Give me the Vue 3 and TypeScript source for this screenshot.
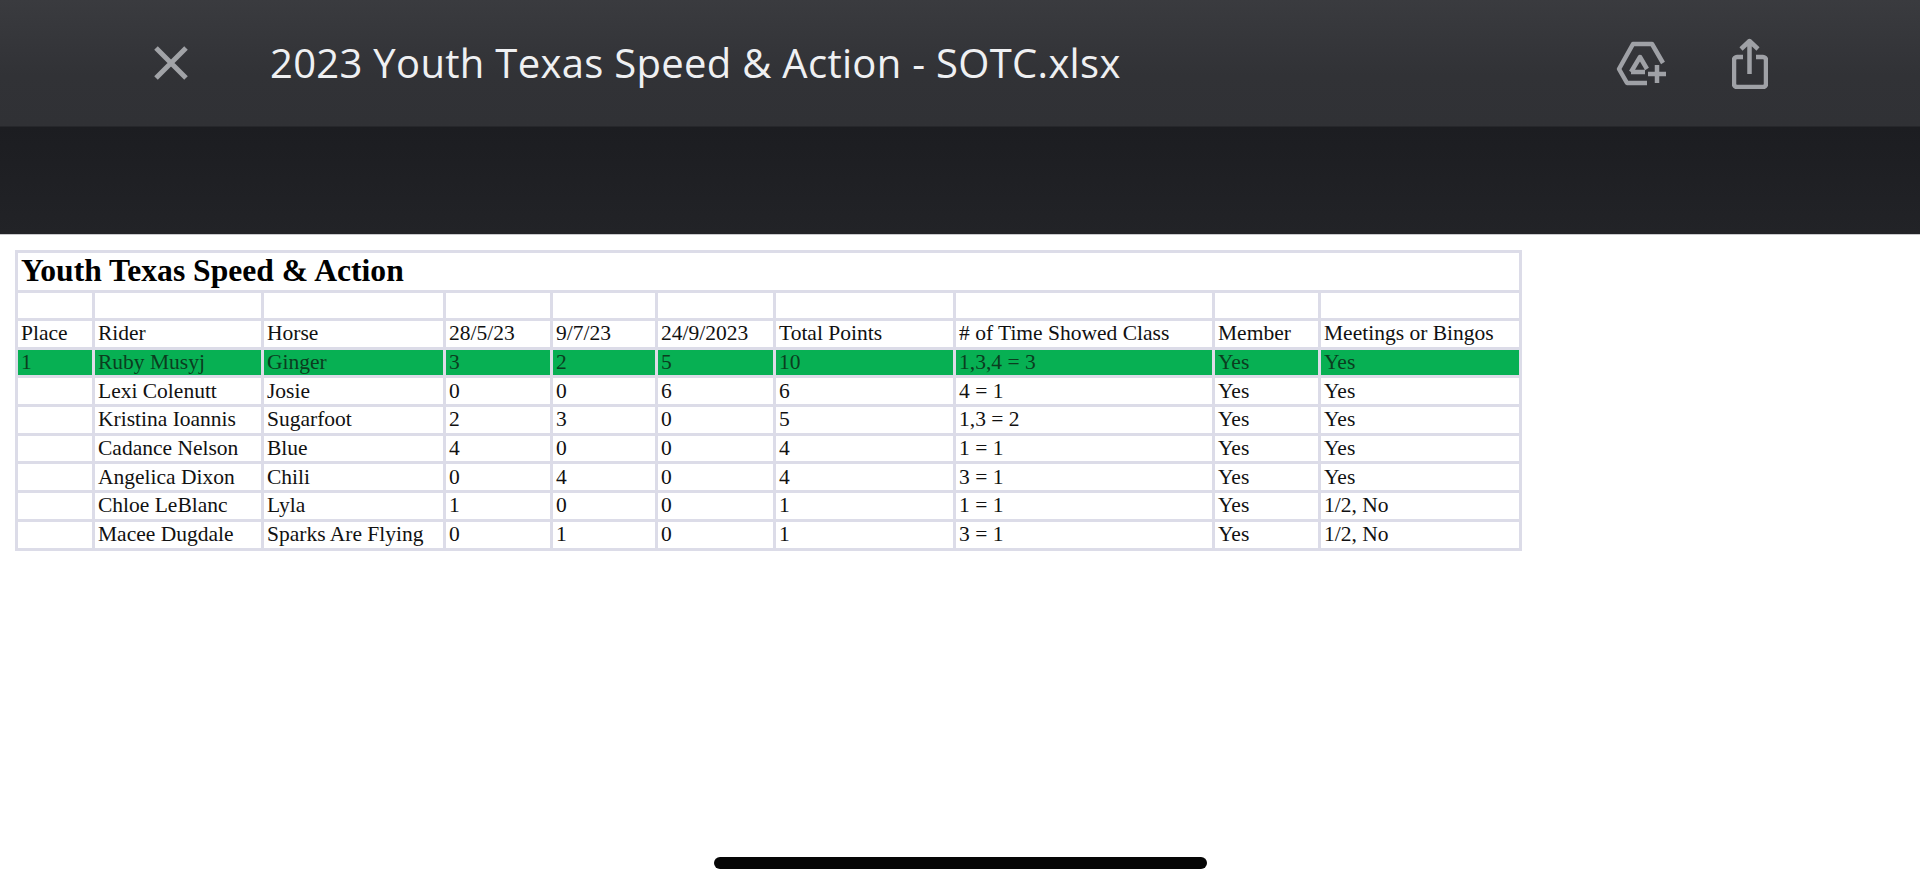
<script setup lang="ts">
const widths = [77, 169, 182, 107, 105, 118, 180, 259, 106, 201]
const headers = ['Place', 'Rider', 'Horse', '28/5/23', '9/7/23', '24/9/2023', 'Total Points', '# of Time Showed Class', 'Member', 'Meetings or Bingos']
const rows: string[][] = [
  ['1', 'Ruby Musyj', 'Ginger', '3', '2', '5', '10', '1,3,4 = 3', 'Yes', 'Yes'],
  ['', 'Lexi Colenutt', 'Josie', '0', '0', '6', '6', '4 = 1', 'Yes', 'Yes'],
  ['', 'Kristina Ioannis', 'Sugarfoot', '2', '3', '0', '5', '1,3 = 2', 'Yes', 'Yes'],
  ['', 'Cadance Nelson', 'Blue', '4', '0', '0', '4', '1 = 1', 'Yes', 'Yes'],
  ['', 'Angelica Dixon', 'Chili', '0', '4', '0', '4', '3 = 1', 'Yes', 'Yes'],
  ['', 'Chloe LeBlanc', 'Lyla', '1', '0', '0', '1', '1 = 1', 'Yes', '1/2, No'],
  ['', 'Macee Dugdale', 'Sparks Are Flying', '0', '1', '0', '1', '3 = 1', 'Yes', '1/2, No'],
]
</script>

<template>
  <div class="page">
    <header class="bar">
      <svg class="close" viewBox="0 0 34 34" width="34" height="34" aria-label="Close">
        <path d="M2 2 L32 32 M32 2 L2 32" />
      </svg>
      <h1 class="name">2023 Youth Texas Speed &amp; Action - SOTC.xlsx</h1>
      <svg class="drive" viewBox="0 0 56 50" width="56" height="50" aria-label="Add to Drive">
        <path d="M35 45 H15 L7 31 L21 6 H40 L51 25" />
        <path d="M19 34 L28 19 L35 31 M19 34 H33" />
        <path d="M45 27 V45 M36 36 H54" />
      </svg>
      <svg class="share" viewBox="0 0 36 51" width="36" height="51" aria-label="Share">
        <path d="M11 19 H5 a3 3 0 0 0 -3 3 V46 a3 3 0 0 0 3 3 H31 a3 3 0 0 0 3 -3 V22 a3 3 0 0 0 -3 -3 H24" />
        <path d="M17.5 36 V3 M9 11 L17.5 3 L26 11" />
      </svg>
    </header>
    <div class="gap"></div>
    <main class="sheet">
      <table class="grid">
        <colgroup>
          <col v-for="(w, i) in widths" :key="i" :style="{ width: w + 'px' }" />
        </colgroup>
        <tbody>
          <tr class="title-row"><td colspan="10">Youth Texas Speed &amp; Action</td></tr>
          <tr class="blank"><td v-for="i in 10" :key="i"></td></tr>
          <tr><td v-for="h in headers" :key="h">{{ h }}</td></tr>
          <tr v-for="(r, ri) in rows" :key="ri" :class="{ win: ri === 0 }">
            <td v-for="(c, ci) in r" :key="ci">{{ c }}</td>
          </tr>
        </tbody>
      </table>
    </main>
    <div class="home"></div>
  </div>
</template>

<style>
html, body { margin: 0; background: #fff; }
</style>

<style scoped>
.page {
  width: 1920px;
  height: 887px;
  display: flex;
  flex-direction: column;
  overflow: hidden;
  background: #fff;
}
.bar {
  height: 127px;
  flex: none;
  display: flex;
  align-items: center;
  padding-left: 154px;
  box-sizing: border-box;
  background: linear-gradient(#3a3b3f, #313236 60%, #303135);
  border-bottom: 1px solid #26272b;
}
.close { flex: none; }
.close path { fill: none; stroke: #a1a3a7; stroke-width: 5; }
.name {
  margin: 0 0 2px 82px;
  flex: none;
  width: 1342px;
  font: 500 40px "Open Sans", sans-serif;
  letter-spacing: 0.3px;
  color: #eff0f2;
  white-space: nowrap;
}
.drive { flex: none; }
.drive path, .share path {
  fill: none;
  stroke: #9fa1a6;
  stroke-width: 4.5;
  stroke-linejoin: round;
}
.share { flex: none; margin-left: 64px; }
.gap {
  height: 107px;
  flex: none;
  background: linear-gradient(#1c1d21, #222327);
  border-bottom: 1px solid #c9c9cc;
}
.sheet {
  flex: 1;
  padding: 15px 0 0 15px;
}
.grid {
  border-collapse: collapse;
  table-layout: fixed;
  width: 1504px;
  font: 400 21.5px "Liberation Serif", serif;
  color: #111;
}
.grid td {
  border: 3px solid #dcdce8;
  height: 25.7px;
  padding: 0 0 0 3px;
  white-space: nowrap;
  line-height: 25px;
  overflow: hidden;
}
.title-row td {
  height: 35px;
  padding-bottom: 2px;
  font-size: 31.6px;
  font-weight: 700;
  color: #000;
}
.blank td { height: 25px; }
.win td {
  background: #07b053;
  color: #0b3d1f;
}
.home {
  position: absolute;
  left: 714px;
  top: 857px;
  width: 493px;
  height: 12px;
  border-radius: 6px;
  background: #050505;
}
</style>
